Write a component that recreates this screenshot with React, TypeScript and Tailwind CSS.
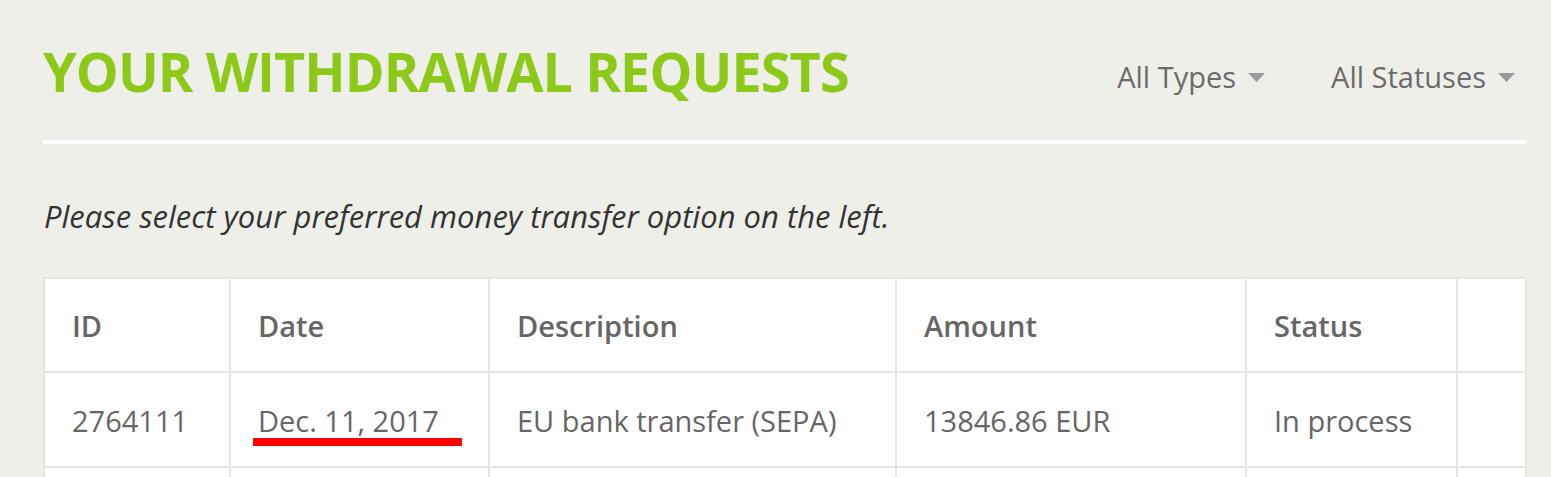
const rows = [
  { id: "2764111", date: "Dec. 11, 2017", description: "EU bank transfer (SEPA)", amount: "13846.86 EUR", status: "In process" },
];

const Caret = () => (
  <svg width="17" height="9" viewBox="0 0 17 9" className="ml-[12px] fill-[#9a9a9a]">
    <path d="M0 0 H17 L8.5 9 Z" />
  </svg>
);

const cols = "grid grid-cols-[186px_259px_407px_350px_211px_1fr]";
const cell = "flex items-center pl-[27px] border-r-2 border-[#e6e6e6] last:border-r-0";

export default function App() {
  return (
    <div className="min-h-[477px] bg-[#efefea] pl-[43px] pr-[24px] pt-[32px] font-['Open_Sans',sans-serif] text-[#666666]">
      <div className="flex items-center justify-between h-[78px]">
        <h1 className="text-[54px] leading-none font-bold text-[#8cc919] tracking-[-0.9px]">YOUR WITHDRAWAL REQUESTS</h1>
        <div className="flex items-center gap-[66px] pt-[12px] pr-[12px] text-[29px] text-[#6b6b6b]">
          <button className="flex items-center">
            All Types
            <Caret />
          </button>
          <button className="flex items-center">
            All Statuses
            <Caret />
          </button>
        </div>
      </div>
      <div className="h-[4px] bg-white mt-[30px]" />
      <p className="mt-[57px] text-[31px] italic text-[#333333] leading-none pl-[1px]">
        Please select your preferred money transfer option on the left.
      </p>
      <div className="mt-[45px] bg-white border-2 border-[#e6e6e6] text-[29px]">
        <div className={`${cols} h-[94px] border-b-2 border-[#e6e6e6] font-semibold`}>
          <div className={`${cell} pt-[2px]`}>ID</div>
          <div className={`${cell} pt-[2px]`}>Date</div>
          <div className={`${cell} pt-[2px]`}>Description</div>
          <div className={`${cell} pt-[2px]`}>Amount</div>
          <div className={`${cell} pt-[2px]`}>Status</div>
          <div className={cell}></div>
        </div>
        {rows.map((r) => (
          <div key={r.id} className={`${cols} h-[95px] border-b-2 border-[#e6e6e6]`}>
            <div className={`${cell} pt-[2px]`}>{r.id}</div>
            <div className={`${cell} pt-[2px]`}>
              <span className="relative">
                {r.date}
                <span className="absolute left-[-5px] right-[-23px] bottom-[-4px] h-[8px] bg-[#ff0000]" />
              </span>
            </div>
            <div className={`${cell} pt-[2px]`}>{r.description}</div>
            <div className={`${cell} pt-[2px]`}>{r.amount}</div>
            <div className={`${cell} pt-[2px]`}>{r.status}</div>
            <div className={cell}></div>
          </div>
        ))}
        <div className={`${cols} h-[60px]`}>
          <div className={cell}></div>
          <div className={cell}></div>
          <div className={cell}></div>
          <div className={cell}></div>
          <div className={cell}></div>
          <div className={cell}></div>
        </div>
      </div>
    </div>
  );
}
